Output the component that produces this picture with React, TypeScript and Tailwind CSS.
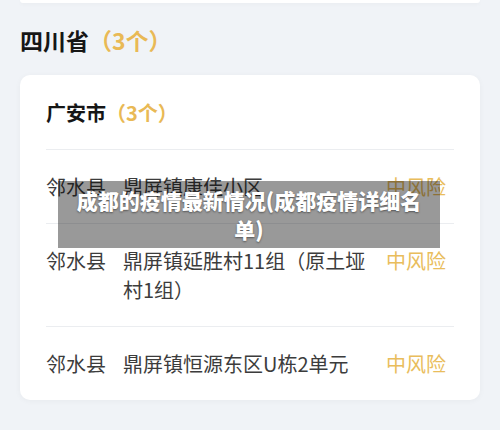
import React from 'react';

type Area = { county: string; address: string; level: string };

const areas: Area[] = [
  { county: '邻水县', address: '鼎屏镇康佳小区', level: '中风险' },
  { county: '邻水县', address: '鼎屏镇延胜村11组（原土垭村1组）', level: '中风险' },
  { county: '邻水县', address: '鼎屏镇恒源东区U栋2单元', level: '中风险' },
];

const AreaRow = ({ a, last }: { a: Area; last: boolean }) => (
  <div
    className={`grid grid-cols-[77px_1fr_68px] py-[22px] text-[20px] leading-[29px] ${
      last ? '' : 'border-b border-[#ebedf0]'
    }`}
  >
    <div className="text-[#3c3c3c]">{a.county}</div>
    <div className="pr-1 text-[#3c3c3c]">{a.address}</div>
    <div className="text-[#e9bd5c] whitespace-nowrap">{a.level}</div>
  </div>
);

export default function App() {
  return (
    <div className="relative w-[500px] h-[430px] overflow-hidden bg-[#f0f3f7] font-['Noto_Sans_CJK_SC','Noto_Sans',sans-serif]">
      {/* tail of the previous province card */}
      <div className="mx-5 h-[3px] bg-white rounded-b-[10px] shadow-[0_1px_4px_rgba(0,0,0,0.04)]" />

      <h2 className="mt-[21px] px-5 text-[23px] leading-8 font-bold text-[#161616]">
        四川省<span className="text-[#e9b955]">（3个）</span>
      </h2>

      <div className="mx-5 mt-[19px] rounded-[10px] bg-white px-[26px] pt-6 shadow-[0_1px_6px_rgba(0,0,0,0.04)]">
        <div className="pb-[22px] border-b border-[#ebedf0] text-[20px] leading-7 font-bold text-[#161616]">
          广安市<span className="text-[#e9b955]">（3个）</span>
        </div>
        {areas.map((a, i) => (
          <AreaRow key={i} a={a} last={i === areas.length - 1} />
        ))}
      </div>

      {/* caption banner */}
      <div className="absolute left-[58px] top-[181px] w-[382px] h-[67px] bg-black/40 flex items-center justify-center px-[10px]">
        <p className="text-center text-white font-black text-[21px] leading-[29px] [text-shadow:0_1px_2px_rgba(0,0,0,0.45)]">
          成都的疫情最新情况(成都疫情详细名单)
        </p>
      </div>
    </div>
  );
}
